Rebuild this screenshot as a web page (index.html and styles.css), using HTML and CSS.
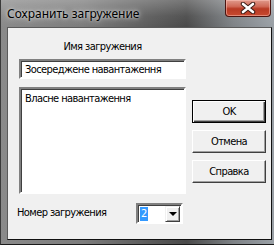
FILE: index.html
```html
<!DOCTYPE html>
<html lang="ru">
<head>
    <meta charset="UTF-8">
    <title>Сохранить загружение</title>
    <link rel="stylesheet" href="styles.css">
</head>
<body>
    <div class="window">
        <div class="titlebar">
            <span class="title">Сохранить загружение</span>
            <div class="close">
                <svg width="16" height="12" viewBox="0 0 16 12">
                    <path d="M3 2 L13 10 M13 2 L3 10" stroke="#3a1a14" stroke-width="4.5" stroke-linecap="round"/>
                    <path d="M3 2 L13 10 M13 2 L3 10" stroke="#fff" stroke-width="2.6" stroke-linecap="round"/>
                </svg>
            </div>
        </div>
        <div class="client">
            <div class="main">
                <div class="left">
                    <div class="label">Имя загружения</div>
                    <div class="field">Зосереджене навантаження</div>
                    <div class="list">
                        <div class="item">Власне навантаження</div>
                    </div>
                </div>
                <div class="buttons">
                    <div class="btn default">OK</div>
                    <div class="btn">Отмена</div>
                    <div class="btn">Справка</div>
                </div>
            </div>
            <div class="bottom">
                <span class="bottom-label">Номер загружения</span>
                <div class="combo">
                    <div class="combo-text"><span class="sel">2</span></div>
                    <div class="arrow"><span class="tri"></span></div>
                </div>
            </div>
        </div>
    </div>
</body>
</html>
```

FILE: styles.css
```css
body {
    margin: 0;
    padding: 0;
    width: 274px;
    height: 245px;
    overflow: hidden;
    font-family: "DejaVu Sans Condensed", "DejaVu Sans", sans-serif;
    font-stretch: condensed;
    font-size: 11px;
    letter-spacing: -0.6px;
    color: #000;
}
.window {
    width: 274px;
    height: 245px;
    display: flex;
    flex-direction: column;
    background: linear-gradient(90deg, #8a8a8a 0%, #7c7c7c 30%, #5a5a5a 55%, #4a4a4a 68%, #7e8286 85%, #9aa0a6 100%);
    box-sizing: border-box;
    border-left: 1px solid #3a3a3a;
    border-bottom: 1px solid #1a1a1a;
}
.titlebar {
    height: 27px;
    display: flex;
    align-items: flex-start;
    justify-content: space-between;
    background: linear-gradient(180deg, rgba(255,255,255,0.25) 0%, rgba(255,255,255,0.05) 60%, rgba(0,0,0,0) 100%);
}
.title {
    font-family: "Noto Sans", "Open Sans", sans-serif;
    font-stretch: normal;
    letter-spacing: 0;
    font-size: 12px;
    line-height: 16px;
    margin: 6px 0 0 6px;
    color: #000;
    text-shadow: 0 0 6px rgba(255,255,255,0.8), 0 0 3px rgba(255,255,255,0.6);
}
.close {
    width: 46px;
    height: 17px;
    margin-right: 3px;
    box-sizing: border-box;
    border: 1px solid #4a1410;
    border-top: none;
    border-radius: 0 0 4px 4px;
    background: linear-gradient(180deg, #e09a8c 0%, #d06a58 40%, #b83a24 55%, #c84a30 100%);
    display: flex;
    align-items: center;
    justify-content: center;
    box-shadow: inset 0 0 0 1px rgba(255,200,190,0.5);
}
.client {
    margin-left: 6px;
    width: 265px;
    height: 213px;
    box-sizing: border-box;
    background: #f0f0f0;
    border: 1px solid #5a5a5a;
    border-right-color: #111;
    border-bottom-color: #111;
    display: flex;
    flex-direction: column;
}
.main {
    display: flex;
}
.left {
    width: 167px;
    padding: 12px 0 0 11px;
    display: flex;
    flex-direction: column;
}
.label {
    text-align: center;
    line-height: 13px;
    height: 13px;
    margin-bottom: 6px;
}
.field {
    height: 20px;
    box-sizing: border-box;
    background: #fff;
    border: 2px solid;
    border-color: #808080 #fff #fff #808080;
    box-shadow: inset 1px 1px 0 #404040;
    padding: 2px 0 0 4px;
    line-height: 14px;
    white-space: nowrap;
}
.list {
    margin-top: 8px;
    height: 107px;
    box-sizing: border-box;
    background: #fff;
    border: 2px solid;
    border-color: #808080 #fff #fff #808080;
    box-shadow: inset 1px 1px 0 #404040;
    padding: 3px 0 0 4px;
}
.item {
    line-height: 13px;
}
.buttons {
    margin: 72px 0 0 6px;
    display: flex;
    flex-direction: column;
    gap: 7px;
}
.btn {
    width: 74px;
    height: 23px;
    box-sizing: border-box;
    background: #f0f0f0;
    border: 1px solid;
    border-color: #fff #404040 #404040 #fff;
    box-shadow: inset -1px -1px 0 #a0a0a0;
    display: flex;
    align-items: center;
    justify-content: center;
}
.btn.default {
    border: 1px solid #000;
    box-shadow: inset 1px 1px 0 #fff, inset -1px -1px 0 #404040, inset -2px -2px 0 #a0a0a0;
}
.bottom {
    display: flex;
    align-items: center;
    margin: 9px 0 0 9px;
}
.bottom-label {
    width: 119px;
    margin-top: -3px;
}
.combo {
    width: 47px;
    height: 21px;
    box-sizing: border-box;
    background: #fff;
    border: 2px solid;
    border-color: #808080 #fff #fff #808080;
    box-shadow: inset 1px 1px 0 #404040;
    display: flex;
    padding: 1px 1px 0 1px;
}
.combo-text {
    flex: 1;
    padding: 1px 0 0 1px;
}
.sel {
    display: inline-block;
    background: #3399ff;
    color: #fff;
    line-height: 14px;
    padding: 0 1px;
}
.arrow {
    width: 15px;
    height: 16px;
    box-sizing: border-box;
    background: #f0f0f0;
    border: 1px solid;
    border-color: #f0f0f0 #404040 #404040 #f0f0f0;
    box-shadow: inset 1px 1px 0 #fff, inset -1px -1px 0 #a0a0a0;
    display: flex;
    align-items: center;
    justify-content: center;
}
.tri {
    width: 0;
    height: 0;
    border-left: 4px solid transparent;
    border-right: 4px solid transparent;
    border-top: 4px solid #000;
}
```
